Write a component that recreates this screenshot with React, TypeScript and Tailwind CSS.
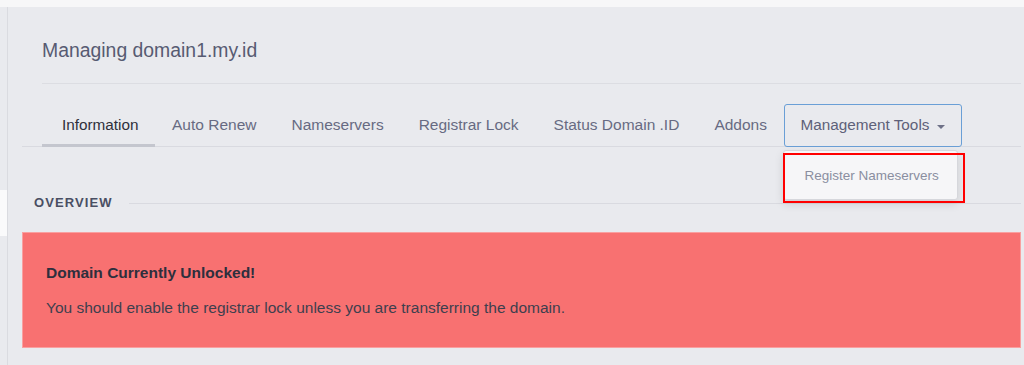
import React from "react";

const tabs = ["Auto Renew", "Nameservers", "Registrar Lock", "Status Domain .ID", "Addons"];

export default function App() {
    return (
        <div className="h-[365px] w-[1024px] overflow-hidden bg-[#f7f7f8] font-['Liberation_Sans',Arial,sans-serif]">
            <div className="h-[7px]" />
            <div className="flex h-[358px]">
                <aside className="w-[8px] shrink-0 border-r border-[#dadbe0] bg-[#e9eaee] pt-[183px]">
                    <div className="h-[46px] w-[7px] bg-[#fafafb]" />
                </aside>
                <main className="flex-1 bg-[#e9eaee] pl-[14px] pr-[3px]">
                    <div className="pl-[20px] pt-[32px]">
                        <h1 className="text-[19.4px] leading-[22px] text-[#575b72]">Managing domain1.my.id</h1>
                        <div className="mt-[22px] h-px bg-[#dcdde2]" />
                    </div>

                    <nav className="mt-[20px] flex border-b border-[#d9dae0] pl-[20px]">
                        <div className="-mb-px flex h-[43px] items-center border-b-[3px] border-[#c4c6ce] pl-[20px] pr-[16px] pt-[2px] text-[15.3px] text-[#2f303b]">
                            Information
                        </div>
                        {tabs.map((t) => (
                            <div key={t} className="flex h-[42px] items-center px-[17.5px] text-[15.5px] text-[#676a82]">
                                {t}
                            </div>
                        ))}
                        <div className="relative">
                            <div className="-mb-px flex h-[43px] items-center gap-[8px] rounded-[3px] border border-[#6a9fd6] pl-[15px] pr-[16px] text-[15.3px] text-[#5e6179]">
                                Management Tools
                                <span className="mt-[2px] inline-block border-x-[4px] border-t-[4px] border-x-transparent border-t-[#6e7187]" />
                            </div>
                            <div className="absolute left-[-1px] top-[46px] z-10 flex h-[50px] w-[175px] items-center rounded-[3px] border border-[#d6d7dc] bg-[#f6f6f8] pl-[20px] pt-[3px] text-[13.5px] text-[#8a8ea0] shadow-[0_4px_10px_rgba(0,0,0,0.12)]">
                                Register Nameservers
                            </div>
                            <div className="absolute left-[-1px] top-[49px] z-20 h-[50px] w-[182px] border-[2px] border-[#ff0000]" />
                        </div>
                    </nav>

                    <div className="mt-[49px] flex items-center pl-[12px]">
                        <span className="text-[13px] font-bold leading-[14px] tracking-[1.1px] text-[#4a4f63]">OVERVIEW</span>
                        <div className="ml-[16px] h-px flex-1 bg-[#d9dae0]" />
                    </div>

                    <div className="mt-[22px] h-[116px] border border-[#f9a0a0] bg-[#f87171] px-[23px] pt-[32px]">
                        <p className="text-[15.5px] font-bold leading-[16px] text-[#2e2f3d]">Domain Currently Unlocked!</p>
                        <p className="mt-[18px] text-[15.5px] leading-[17px] text-[#3e3f4e]">
                            You should enable the registrar lock unless you are transferring the domain.
                        </p>
                    </div>
                </main>
            </div>
        </div>
    );
}
